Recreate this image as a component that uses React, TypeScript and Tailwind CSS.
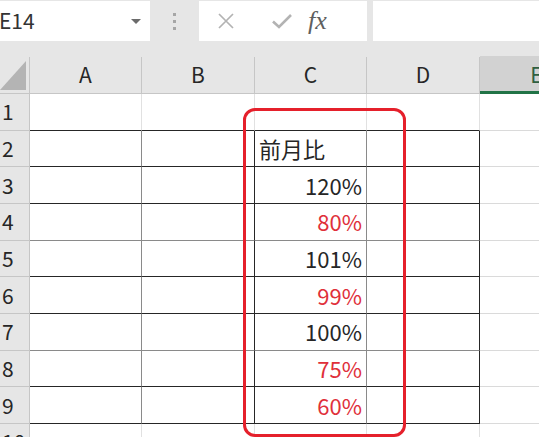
import React from 'react';

// Spreadsheet mock: formula bar + grid with a highlighted column

const font = { fontFamily: '"Noto Sans CJK JP", "Noto Sans", sans-serif' };

type Cell = { text?: string; red?: boolean; align?: 'left' | 'right' };

const cValues: Cell[] = [
  {},
  { text: '前月比', align: 'left' },
  { text: '120%' },
  { text: '80%', red: true },
  { text: '101%' },
  { text: '99%', red: true },
  { text: '100%' },
  { text: '75%', red: true },
  { text: '60%', red: true },
];

// lines that come out grey instead of black in the screenshot
const greyTop = [5, 8];

function FormulaBar() {
  return (
    <div className="flex h-[57px] items-start bg-[#e6e6e6] pt-[1px]">
      <div className="relative flex h-[40px] w-[150px] shrink-0 items-center bg-white">
        <span className="ml-[-1px] text-[21px] text-[#333]">E14</span>
        <svg className="absolute left-[131px] top-[18px]" width="10" height="6" viewBox="0 0 10 6">
          <path d="M0 0 H10 L5 5 Z" fill="#6b6b6b" />
        </svg>
      </div>
      <div className="flex h-[40px] w-[49px] shrink-0 flex-col items-center justify-center gap-[4px]">
        <span className="h-[3px] w-[3px] bg-[#a6a6a6]" />
        <span className="h-[3px] w-[3px] bg-[#a6a6a6]" />
        <span className="h-[3px] w-[3px] bg-[#a6a6a6]" />
      </div>
      <div className="flex h-[40px] w-[168px] shrink-0 items-center bg-white">
        <svg className="ml-[19px]" width="16" height="16" viewBox="0 0 16 16">
          <path d="M1 1 L15 15 M15 1 L1 15" stroke="#b3b3b3" strokeWidth="1.7" />
        </svg>
        <svg className="ml-[38px]" width="20" height="16" viewBox="0 0 20 16">
          <path d="M1 8.5 L7 14 L19 2" stroke="#b3b3b3" strokeWidth="2.6" fill="none" />
        </svg>
        <span
          className="ml-[16px] mt-[-2px] text-[26px] italic text-[#5f5f5f]"
          style={{ fontFamily: '"Liberation Serif", "DejaVu Serif", serif' }}
        >
          fx
        </span>
      </div>
      <div className="ml-[6px] h-[40px] flex-1 bg-white" />
    </div>
  );
}

function HeaderRow() {
  const cols = ['A', 'B', 'C', 'D'];
  return (
    <div className="flex h-[37px] bg-[#e6e6e6]">
      <div className="relative w-[30px] shrink-0 border-r border-b border-[#c6c6c6]">
        <svg className="absolute left-0 top-[4px]" width="27" height="30" viewBox="0 0 27 30">
          <path d="M0 29 L26 29 L26 0 Z" fill="#b4b4b4" />
        </svg>
      </div>
      {cols.map((c, i) => (
        <div
          key={c}
          className={`flex shrink-0 items-center justify-center border-r border-b border-[#c6c6c6] text-[21px] text-[#262626] ${
            i % 2 === 0 ? 'w-[112px]' : 'w-[113px]'
          }`}
        >
          {c}
        </div>
      ))}
      <div className="mt-[-1px] flex w-[113px] shrink-0 items-center justify-center border-b-[3px] border-[#217346] bg-[#d2d2d2] pt-[3px] text-[21px] text-[#2f5f40]">
        E
      </div>
    </div>
  );
}

function Row({ n }: { n: number }) {
  const inTable = n >= 2 && n <= 9;
  const topGrey = greyTop.includes(n + 1);
  const bottomColor = n >= 1 && n <= 9 ? (topGrey ? 'border-b-[#8a8a8a]' : 'border-b-[#262626]') : 'border-b-[#dadada]';
  const cell = cValues[n - 1] || {};

  return (
    <div className="flex h-[36.67px] shrink-0">
      <div className="flex w-[30px] shrink-0 items-center border-r border-b border-[#c6c6c6] bg-[#e6e6e6] pl-[2px] text-[21px] leading-none text-[#262626]">
        {n}
      </div>
      {/* A */}
      <div className={`w-[112px] shrink-0 border-b border-r ${bottomColor} ${inTable ? 'border-r-[#8a8a8a]' : 'border-r-[#e1e1e1]'}`} />
      {/* B */}
      <div className={`w-[113px] shrink-0 border-b border-r ${bottomColor} ${inTable ? 'border-r-[#262626]' : 'border-r-[#e1e1e1]'}`} />
      {/* C */}
      <div
        className={`flex w-[112px] shrink-0 items-center border-b border-r px-[4px] text-[22px] ${bottomColor} ${
          inTable ? 'border-r-[#8a8a8a]' : 'border-r-[#e1e1e1]'
        } ${cell.align === 'left' ? 'justify-start' : 'justify-end'} ${cell.red ? 'text-[#e0303a]' : 'text-[#262626]'}`}
      >
        {cell.text}
      </div>
      {/* D */}
      <div className={`w-[113px] shrink-0 border-b border-r ${bottomColor} ${inTable ? 'border-r-[#262626]' : 'border-r-[#e1e1e1]'}`} />
      <div className="flex-1 border-b border-[#dadada]" />
    </div>
  );
}

export default function App() {
  const rows = [1, 2, 3, 4, 5, 6, 7, 8, 9, 10];
  return (
    <div className="relative h-[437px] w-[539px] overflow-hidden bg-white" style={font}>
      <FormulaBar />
      <HeaderRow />
      <div className="flex flex-col">
        {rows.map((n) => (
          <Row key={n} n={n} />
        ))}
      </div>
      {/* red highlight around column C */}
      <div className="absolute left-[243px] top-[108px] h-[329px] w-[163px] rounded-[12px] border-[3px] border-[#e5202b]" />
    </div>
  );
}
